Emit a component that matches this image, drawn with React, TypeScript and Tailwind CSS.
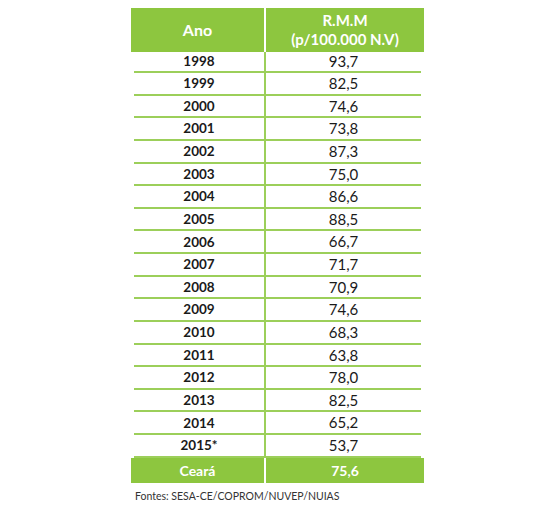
const rows: [string, string][] = [
  ["1998", "93,7"],
  ["1999", "82,5"],
  ["2000", "74,6"],
  ["2001", "73,8"],
  ["2002", "87,3"],
  ["2003", "75,0"],
  ["2004", "86,6"],
  ["2005", "88,5"],
  ["2006", "66,7"],
  ["2007", "71,7"],
  ["2008", "70,9"],
  ["2009", "74,6"],
  ["2010", "68,3"],
  ["2011", "63,8"],
  ["2012", "78,0"],
  ["2013", "82,5"],
  ["2014", "65,2"],
  ["2015*", "53,7"],
];

const App = () => {
  return (
    <div className="w-[555px] h-[514px] bg-white font-['Lato',sans-serif]">
      <div className="ml-[131px] pt-[8px] w-[293px]">
        {/* Header */}
        <div className="flex h-[44px] gap-[2px] text-white font-bold">
          <div className="w-[133px] bg-[#8dc63f] flex items-center justify-center text-[16px]">Ano</div>
          <div className="flex-1 bg-[#8dc63f] flex flex-col items-center justify-center text-[15px] leading-[19px]">
            <span>R.M.M</span>
            <span>(p/100.000 N.V)</span>
          </div>
        </div>
        {/* Body */}
        <div className="mx-[3px]">
          {rows.map(([ano, val], i) => (
            <div
              key={ano}
              className={`flex border-b-2 border-[#9ccf5a] text-[#1a1a1a] ${i === 0 ? "h-[21px]" : "h-[22.64px]"}`}
            >
              <div className="w-[130px] flex items-center justify-center font-bold text-[13.5px]">{ano}</div>
              <div className="flex-1 border-l-2 border-[#9ccf5a] flex items-center justify-center text-[15px]">{val}</div>
            </div>
          ))}
        </div>
        {/* Total */}
        <div className="flex h-[25px] gap-[2px] text-white font-bold text-[14px]">
          <div className="w-[133px] bg-[#8dc63f] flex items-center justify-center">Ceará</div>
          <div className="flex-1 bg-[#8dc63f] flex items-center justify-center">75,6</div>
        </div>
        <div className="mt-[6px] ml-[4px] text-[10.5px] text-[#333]">Fontes: SESA-CE/COPROM/NUVEP/NUIAS</div>
      </div>
    </div>
  );
};

export default App;
